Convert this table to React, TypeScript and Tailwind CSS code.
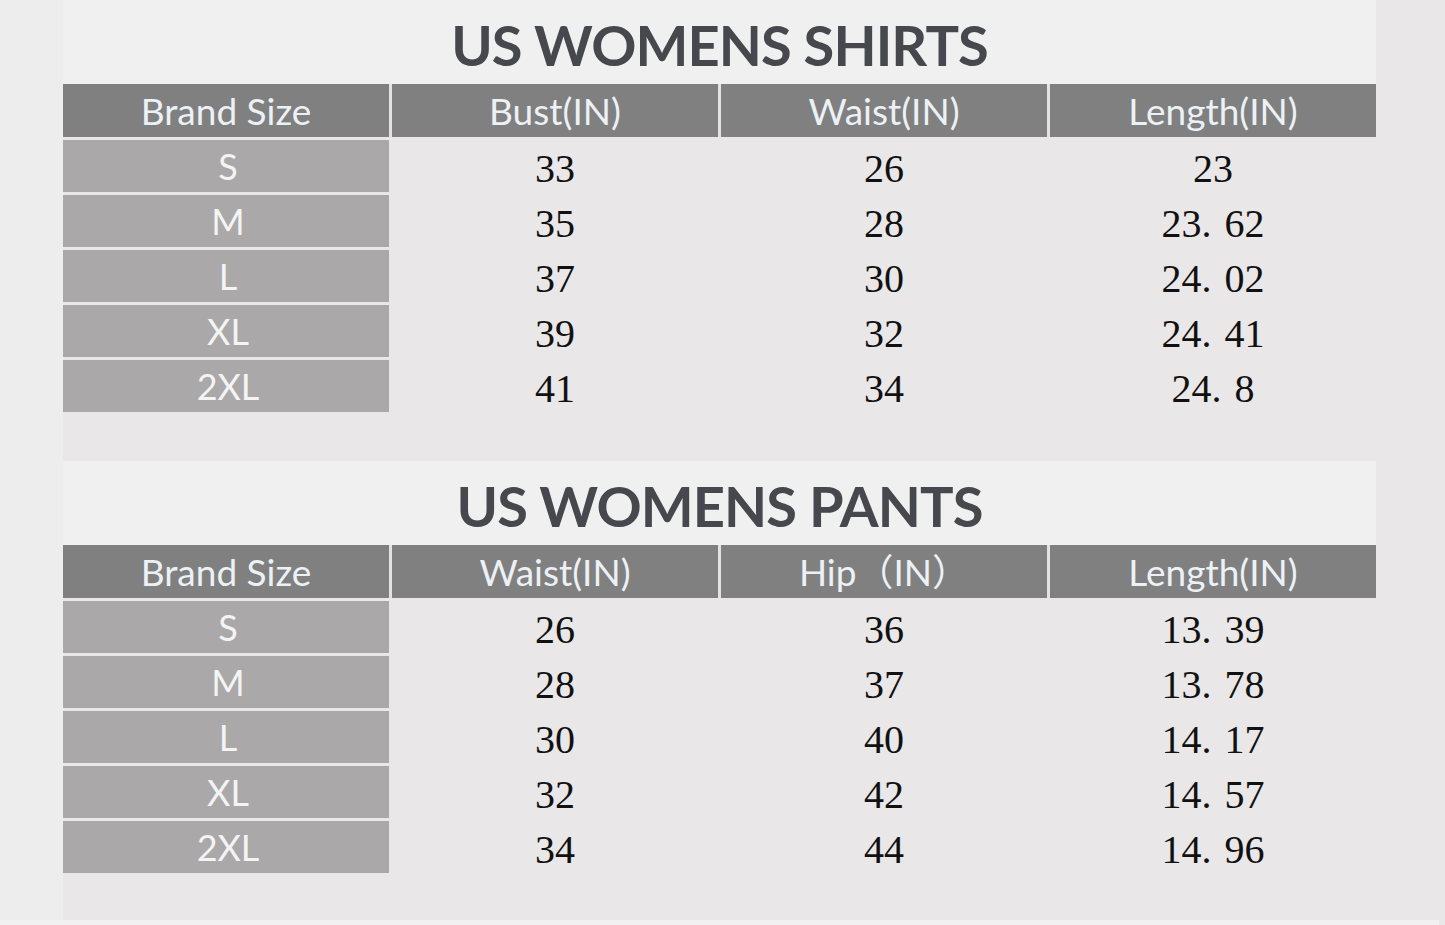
import React from "react";

type Table = {
  title: string;
  headers: string[];
  rows: string[][];
};

const tables: Table[] = [
  {
    title: "US WOMENS SHIRTS",
    headers: ["Brand Size", "Bust(IN)", "Waist(IN)", "Length(IN)"],
    rows: [
      ["S", "33", "26", "23"],
      ["M", "35", "28", "23. 62"],
      ["L", "37", "30", "24. 02"],
      ["XL", "39", "32", "24. 41"],
      ["2XL", "41", "34", "24. 8"],
    ],
  },
  {
    title: "US WOMENS PANTS",
    headers: ["Brand Size", "Waist(IN)", "Hip（IN）", "Length(IN)"],
    rows: [
      ["S", "26", "36", "13. 39"],
      ["M", "28", "37", "13. 78"],
      ["L", "30", "40", "14. 17"],
      ["XL", "32", "42", "14. 57"],
      ["2XL", "34", "44", "14. 96"],
    ],
  },
];

const sans = "font-['Lato','Noto_Sans_CJK_SC',sans-serif]";

const SizeTable = ({ table }: { table: Table }) => {
  return (
    <div className="w-[1313px]">
      {/* title band */}
      <div className="h-[84px] bg-[#f0f0f0] flex items-center justify-center pt-[6px]">
        <h1 className={`${sans} text-[56px] font-bold text-[#47484d] leading-none tracking-[-0.9px]`}>
          {table.title}
        </h1>
      </div>

      <div className="grid grid-cols-4 gap-[3px] bg-[#e4e2e3]">
        {table.headers.map((h) => (
          <div
            key={h}
            className={`${sans} h-[53px] bg-[#808080] flex items-center justify-center text-[37px] text-[#ecf1f6] leading-none`}
          >
            {h}
          </div>
        ))}
      </div>

      <div className="flex flex-col gap-[3px] pt-[3px]">
        {table.rows.map((row) => (
          <div key={row[0]} className="grid grid-cols-4 gap-[3px] h-[52px]">
            <div className={`${sans} bg-[#aba8a9] flex items-center justify-center pl-[4px] text-[36px] text-[#f4f4f4] leading-none`}>
              {row[0]}
            </div>
            {row.slice(1).map((v, i) => (
              <div key={i} className="flex items-center justify-center pt-[6px]">
                <span className="font-['Liberation_Serif',serif] text-[40px] text-[#111111] leading-none [word-spacing:3px]">
                  {v}
                </span>
              </div>
            ))}
          </div>
        ))}
      </div>
    </div>
  );
};

export default function App() {
  return (
    <div className="w-[1445px] h-[925px] bg-[#e9e7e8] flex overflow-hidden">
      <div className="w-[63px] bg-[#eeeded]" />
      <div className="flex flex-col">
        <SizeTable table={tables[0]} />
        <div className="h-[49px]" />
        <SizeTable table={tables[1]} />
        <div className="flex-1" />
        <div className="h-[5px] bg-[#f1f1f1] -mx-[63px]" />
      </div>
      <div className="flex-1" />
    </div>
  );
}
